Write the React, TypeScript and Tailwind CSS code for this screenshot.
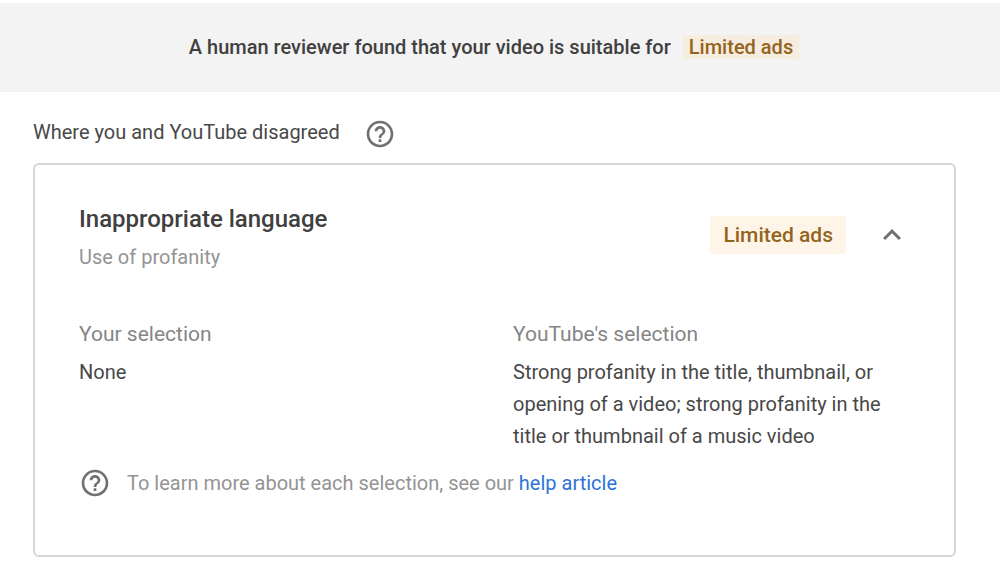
import { MdHelpOutline, MdKeyboardArrowUp } from "react-icons/md";

export default function App() {
  return (
    <main className="min-h-screen bg-white pt-[3px] font-['Roboto',sans-serif] text-xl text-[#484848]">
      <header className="flex h-[89px] items-center justify-center gap-3 bg-[#f3f3f3] pr-3 pb-0.5">
        <h1 className="font-medium text-[#404040]">A human reviewer found that your video is suitable for</h1>
        <span className="bg-[#f6ecdf] px-1.5 leading-6 font-medium text-[#936420]">Limited ads</span>
      </header>
      <section className="pr-11 pl-[33px]">
        <div className="flex h-[71px] items-center gap-6 pt-3">
          <h2 className="pb-1">Where you and YouTube disagreed</h2>
          <button type="button" aria-label="About disagreements" className="text-[#707070]">
            <MdHelpOutline size={32} />
          </button>
        </div>
        <article className="rounded-md border-2 border-[#d6d6d6] pt-[38px] pr-11 pb-14 pl-11">
          <div className="flex items-start justify-between">
            <div>
              <h3 className="text-2xl leading-8 font-medium text-[#404040]">Inappropriate language</h3>
              <p className="pt-0.5 leading-10 text-[#949494]">Use of profanity</p>
            </div>
            <div className="flex items-center gap-7 pt-[13px]">
              <span className="rounded-xs bg-[#fef4e7] px-[13px] text-[21px] leading-[38px] font-medium text-[#936420]">Limited ads</span>
              <button type="button" aria-label="Collapse details" aria-expanded="true" className="text-[#707070]">
                <MdKeyboardArrowUp size={36} />
              </button>
            </div>
          </div>
          <div className="grid grid-cols-[434px_1fr] pt-[41px] leading-8">
            <div>
              <h4 className="pb-1.5 text-[21px] text-[#858585]">Your selection</h4>
              <p>None</p>
            </div>
            <div>
              <h4 className="pb-1.5 text-[21px] text-[#858585]">YouTube's selection</h4>
              <p>Strong profanity in the title, thumbnail, or opening of a video; strong profanity in the title or thumbnail of a music video</p>
            </div>
          </div>
          <div className="flex items-center gap-4 pt-[15px] text-[#949494]">
            <MdHelpOutline size={32} className="text-[#707070]" />
            <p>To learn more about each selection, see our <a href="#help" className="text-[#2d74d6]">help article</a></p>
          </div>
        </article>
      </section>
    </main>
  );
}
